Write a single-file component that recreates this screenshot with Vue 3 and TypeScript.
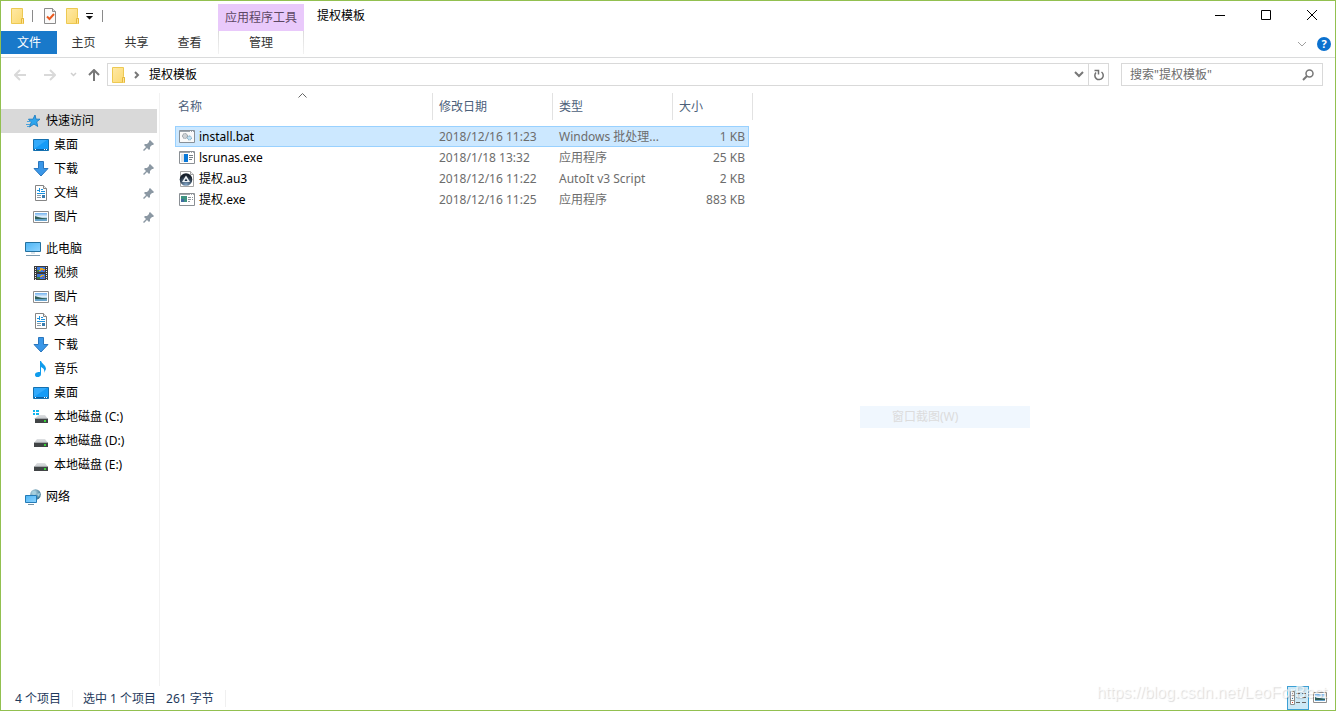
<script setup lang="ts">
import { ref } from 'vue'

interface NavItem {
  label: string
  icon: string
  pinned?: boolean
}
interface NavGroup extends NavItem {
  selected?: boolean
  children: NavItem[]
}
interface FileRow {
  name: string
  icon: string
  date: string
  type: string
  size: string
}

const tabs: string[] = ['主页', '共享', '查看']

const groups: NavGroup[] = [
  {
    label: '快速访问',
    icon: 'star',
    selected: true,
    children: [
      { label: '桌面', icon: 'desktop', pinned: true },
      { label: '下载', icon: 'download', pinned: true },
      { label: '文档', icon: 'document', pinned: true },
      { label: '图片', icon: 'picture', pinned: true },
    ],
  },
  {
    label: '此电脑',
    icon: 'computer',
    children: [
      { label: '视频', icon: 'video' },
      { label: '图片', icon: 'picture' },
      { label: '文档', icon: 'document' },
      { label: '下载', icon: 'download' },
      { label: '音乐', icon: 'music' },
      { label: '桌面', icon: 'desktop' },
      { label: '本地磁盘 (C:)', icon: 'drive-c' },
      { label: '本地磁盘 (D:)', icon: 'drive' },
      { label: '本地磁盘 (E:)', icon: 'drive' },
    ],
  },
  { label: '网络', icon: 'network', children: [] },
]

const files: FileRow[] = [
  { name: 'install.bat', icon: 'bat', date: '2018/12/16 11:23', type: 'Windows 批处理...', size: '1 KB' },
  { name: 'lsrunas.exe', icon: 'exe', date: '2018/1/18 13:32', type: '应用程序', size: '25 KB' },
  { name: '提权.au3', icon: 'au3', date: '2018/12/16 11:22', type: 'AutoIt v3 Script', size: '2 KB' },
  { name: '提权.exe', icon: 'exe-green', date: '2018/12/16 11:25', type: '应用程序', size: '883 KB' },
]

const selected = ref<string>('install.bat')
const query = ref<string>('')
</script>

<template>
  <div class="window">
    <svg class="defs" aria-hidden="true">
      <defs>
        <linearGradient id="g-folder" x1="0" y1="0" x2="1" y2="1">
          <stop offset="0" stop-color="#ffe9a6" />
          <stop offset="1" stop-color="#fbd96f" />
        </linearGradient>
        <linearGradient id="g-blue" x1="0" y1="0" x2="1" y2="1">
          <stop offset="0" stop-color="#4db5f5" />
          <stop offset="1" stop-color="#8fd4ff" />
        </linearGradient>
        <linearGradient id="g-sky" x1="0" y1="0" x2="0" y2="1">
          <stop offset="0" stop-color="#6fb0ee" />
          <stop offset="0.5" stop-color="#eef7fc" />
          <stop offset="0.7" stop-color="#5d9bb8" />
          <stop offset="1" stop-color="#6fa9d6" />
        </linearGradient>
        <linearGradient id="g-drive" x1="0" y1="0" x2="0" y2="1">
          <stop offset="0" stop-color="#dfe1e3" />
          <stop offset="1" stop-color="#c3c6ca" />
        </linearGradient>
        <radialGradient id="g-globe" cx="0.35" cy="0.35" r="0.7">
          <stop offset="0" stop-color="#c4e2ee" />
          <stop offset="1" stop-color="#38728f" />
        </radialGradient>
        <radialGradient id="g-orb" cx="0.5" cy="0.9" r="0.7">
          <stop offset="0" stop-color="#7ea2c4" />
          <stop offset="1" stop-color="#17202b" />
        </radialGradient>
      </defs>
      <symbol id="i-folder" viewBox="0 0 16 16">
        <path d="M2.500.5h11v9l1 1v5h-12z" fill="url(#g-folder)" stroke="#edc952" />
        <path d="M12.500 15.500v-5h2v5" fill="#ffe596" stroke="#e6b93c" />
      </symbol>
      <symbol id="i-props" viewBox="0 0 16 16">
        <path d="M2.500.5h8l3 3v12h-11z" fill="#fafafa" stroke="#8b8b8b" />
        <path d="M10.500.5v3h3" fill="#ddd" stroke="#8b8b8b" />
        <path d="M5 8.500l2.500 2.500 4.500-5" fill="none" stroke="#ea5a20" stroke-width="2" />
      </symbol>
      <symbol id="i-star" viewBox="0 0 16 16">
        <path d="M10 2l1 4.200h4l-3.300 2.600 1 4.700L9 11l-4.500 3 1.700-4.800L3.500 6.200h4.500z" fill="#2da5ee" stroke="#2583c6" />
        <path d="M2 8.500h4M1 11.500h4M2 13.500h2" stroke="#4aa3dc" />
      </symbol>
      <symbol id="i-desktop" viewBox="0 0 16 16">
        <path d="M.5 2.500h15v11H.5z" fill="#149bf7" stroke="#1470af" />
        <path d="M1 12L14 3H1z" fill="#33aafb" />
        <path d="M1 12.500h14" stroke="#0c5d9e" />
        <path d="M2 12.500h1M11 12.500h1M13 12.500h1" stroke="#fff" />
      </symbol>
      <symbol id="i-download" viewBox="0 0 16 16">
        <path d="M5.500.5h5v7h4.500L8 15 1 7.500h4.500z" fill="#3a97e8" stroke="#2a76bd" />
      </symbol>
      <symbol id="i-document" viewBox="0 0 16 16">
        <path d="M2.500.5h8l3 3v12h-11z" fill="#fff" stroke="#858585" />
        <path d="M10.500.5v3h3" fill="#eee" stroke="#858585" />
        <path d="M4 5.500h3M6.500 3v4M8 4.500h2M8 6.500h4M4 8.500h8" fill="none" stroke="#1c91dd" />
        <path d="M4 10.500h4M4 12.500h4" stroke="#8b9aa6" />
        <path d="M9 10h3v3H9z" fill="#3a7cae" />
      </symbol>
      <symbol id="i-picture" viewBox="0 0 16 16">
        <path d="M.5 2.500h15v11H.5z" fill="#fff" stroke="#8e8e8e" />
        <path d="M2 4h12v8H2z" fill="url(#g-sky)" />
        <path d="M2 7l3 1 4 1 5 .5V10H2z" fill="#315f58" />
      </symbol>
      <symbol id="i-computer" viewBox="0 0 16 16">
        <path d="M.5 1.500h15v9H.5z" fill="url(#g-blue)" stroke="#24719f" />
        <path d="M6 11h4v2H6z" fill="#dbe4ea" />
        <path d="M1 14.500h14" stroke="#7c9aaf" />
      </symbol>
      <symbol id="i-video" viewBox="0 0 16 16">
        <path d="M1 1h14v14H1z" fill="#3b3b3b" />
        <path d="M4 2h8v5H4zM4 9h8v5H4z" fill="#3d78da" />
        <path d="M4 5h2v2H4zM4 12h3v2H4z" fill="#397a43" />
        <path d="M7 3h3v1h2v1H8v1H6V5h1zM8 10h3v1H9v1H7v-1h1z" fill="#e5a724" />
        <path d="M10 5h1v1h-1zM10 12h1v1h-1z" fill="#da3929" />
        <path d="M2.500 2v13M13.500 2v13" stroke="#eee" stroke-dasharray="1 1" />
      </symbol>
      <symbol id="i-music" viewBox="0 0 16 16">
        <path d="M7 0h1c1 3 5 4 5 8l-2 4c1-4-1-5-3-6v7c0 4-6 4-6 1s3-3 5-3z" fill="#109cec" />
      </symbol>
      <symbol id="i-drive" viewBox="0 0 16 16">
        <path d="M4 6h8l3 4H1z" fill="url(#g-drive)" />
        <path d="M1 10h14v4H1z" fill="#414446" />
        <path d="M1 9.500h14" stroke="#a2a6a9" />
        <path d="M11 11h2v2h-2z" fill="#38d338" />
      </symbol>
      <symbol id="i-drive-c" viewBox="0 0 16 16">
        <path d="M6 6h6l3 4H1z" fill="url(#g-drive)" />
        <path d="M2 10h13v4H2z" fill="#414446" />
        <path d="M2 9.500h13" stroke="#a2a6a9" />
        <path d="M11 11h2v2h-2z" fill="#38d338" />
        <path d="M0 1h2v2H0zM3 1h3v2H3zM0 4h2v2H0zM3 4h3v2H3z" fill="#10b5ee" />
      </symbol>
      <symbol id="i-network" viewBox="0 0 16 16">
        <circle cx="10.500" cy="5.500" r="5.300" fill="url(#g-globe)" />
        <path d="M7 3l3-1 1 2-2 2zM12 5l3-1-1 4z" fill="#a5d1df" />
        <path d="M.5 6.500h11v7H.5z" fill="url(#g-blue)" stroke="#247bb6" />
        <path d="M3 15.500h6" stroke="#7592a5" />
      </symbol>
      <symbol id="i-bat" viewBox="0 0 16 16">
        <path d="M.5 1.500h15v12H.5z" fill="#fafafa" stroke="#879098" />
        <path d="M1 2.500h14" stroke="#9aa4ac" />
        <path d="M11 2.500h1M13 2.500h1" stroke="#fff" />
        <circle cx="6" cy="7" r="2.500" fill="#cdd2d6" stroke="#7e878e" stroke-dasharray="1 .6" />
        <circle cx="10.500" cy="9" r="2" fill="#c2e0f2" stroke="#639dbd" stroke-dasharray="1 .6" />
      </symbol>
      <symbol id="i-exe" viewBox="0 0 16 16">
        <path d="M.5 1.500h15v12H.5z" fill="#fff" stroke="#8a8f94" />
        <path d="M1 2.500h14" stroke="#a3a8ad" />
        <path d="M11 2.500h1M13 2.500h1" stroke="#fff" />
        <path d="M2 4h3v8H2z" fill="#dfe3e6" />
        <path d="M5 4h4v8H5z" fill="#0878d8" />
        <path d="M10 5.500h4M10 7.500h4M10 9.500h3" stroke="#777f86" />
      </symbol>
      <symbol id="i-exe-green" viewBox="0 0 16 16">
        <path d="M.5 1.500h15v12H.5z" fill="#fff" stroke="#8a8f94" />
        <path d="M1 2.500h14" stroke="#a3a8ad" />
        <path d="M11 2.500h1M13 2.500h1" stroke="#fff" />
        <path d="M2 4h6v6H2z" fill="#3d9280" />
        <path d="M2 7h3v3H2z" fill="#3f6ba0" />
        <path d="M9 5.500h3M9 7.500h3M9 9.500h2M13 5.500h1M13 7.500h1" stroke="#8b949b" />
      </symbol>
      <symbol id="i-au3" viewBox="0 0 16 16">
        <path d="M1.500.5h10l3 3v12h-13z" fill="#fff" stroke="#a5a5a5" />
        <path d="M11.500.5v3h3" fill="#eee" stroke="#a5a5a5" />
        <circle cx="7" cy="8.500" r="6.300" fill="url(#g-orb)" />
        <path d="M7 4.500l4 6.500H3z" fill="#eef2f5" />
        <path d="M7 7.500l1.500 2.500h-3z" fill="#1c3047" />
      </symbol>
      <symbol id="i-pin" viewBox="0 0 12 12">
        <path d="M7 1l4 4-1 1-1 0-2 2 0 2-1 1-2-2-3 3-1-1 3-3-2-2 1-1h2l2-2V2z" fill="#8b98a3" />
      </symbol>
    </svg>

    <header class="ribbon">
      <div class="left">
        <div class="quick">
          <svg class="icon"><use href="#i-folder" /></svg>
          <span class="bar"></span>
          <button class="tool" aria-label="属性"><svg class="icon"><use href="#i-props" /></svg></button>
          <button class="tool" aria-label="新建文件夹"><svg class="icon"><use href="#i-folder" /></svg></button>
          <button class="tool more" aria-label="自定义快速访问工具栏">
            <svg width="8" height="7" viewBox="0 0 8 7"><path d="M0 0h7v1H0zM0 3h7L3.500 6.500z" fill="#111" /></svg>
          </button>
          <span class="bar"></span>
        </div>
        <nav class="tabs">
          <button class="tab file">文件</button>
          <button v-for="tab in tabs" :key="tab" class="tab">{{ tab }}</button>
        </nav>
      </div>
      <div class="context">
        <div class="context-title">应用程序工具</div>
        <button class="tab manage">管理</button>
      </div>
      <h1 class="title">提权模板</h1>
      <div class="right">
        <div class="controls">
          <button class="ctl" aria-label="最小化"><svg width="10" height="10"><path d="M0 5.500h10" stroke="#000" /></svg></button>
          <button class="ctl" aria-label="最大化"><svg width="10" height="10"><path d="M.5.5h9v9h-9z" fill="none" stroke="#000" /></svg></button>
          <button class="ctl" aria-label="关闭"><svg width="10" height="10"><path d="M0 0l10 10M10 0L0 10" stroke="#000" /></svg></button>
        </div>
        <div class="help">
          <button class="tool" aria-label="展开功能区"><svg width="10" height="6"><path d="M1 1l4 4 4-4" fill="none" stroke="#a0a0a0" /></svg></button>
          <button class="question" aria-label="帮助">?</button>
        </div>
      </div>
    </header>

    <div class="address">
      <div class="arrows">
        <button class="tool" aria-label="后退"><svg width="12" height="12"><path d="M12 6H1M6 1L1 6l5 5" fill="none" stroke="#d9d9d9" stroke-width="2" /></svg></button>
        <button class="tool" aria-label="前进"><svg width="12" height="12"><path d="M0 6h11M6 1l5 5-5 5" fill="none" stroke="#d9d9d9" stroke-width="2" /></svg></button>
        <button class="tool recent" aria-label="最近位置"><svg width="7" height="5"><path d="M1 1l2.500 2.500L6 1" fill="none" stroke="#cfcfcf" stroke-width="1.500" /></svg></button>
        <button class="tool" aria-label="上移"><svg width="12" height="12"><path d="M6 12V1M1 6l5-5 5 5" fill="none" stroke="#777" stroke-width="2" /></svg></button>
      </div>
      <div class="path">
        <svg class="icon"><use href="#i-folder" /></svg>
        <svg class="chevron" width="6" height="8"><path d="M1 1l3 3-3 3" fill="none" stroke="#777" stroke-width="2" /></svg>
        <a class="crumb" href="#">提权模板</a>
        <button class="tool drop" aria-label="历史记录"><svg width="10" height="7"><path d="M1 1l4 4 4-4" fill="none" stroke="#777" stroke-width="2" /></svg></button>
        <button class="refresh" aria-label="刷新">
          <svg width="12" height="12"><path d="M3 3.500A4.200 4.200 0 1 0 8.500 3M1.500 1.500h4v4" fill="none" stroke="#707070" stroke-width="1.500" /></svg>
        </button>
      </div>
      <div class="search">
        <input v-model="query" type="search" aria-label="搜索" placeholder='搜索"提权模板"' />
        <svg width="12" height="12"><circle cx="7.500" cy="4.500" r="3.500" fill="none" stroke="#777" stroke-width="1.500" /><path d="M5 7l-4 4" stroke="#777" stroke-width="2" /></svg>
      </div>
    </div>

    <div class="body">
      <nav class="sidebar">
        <div v-for="group in groups" :key="group.label" class="group">
          <a href="#" class="nav-row" :class="{ current: group.selected }">
            <svg class="icon"><use :href="'#i-' + group.icon" /></svg>{{ group.label }}
          </a>
          <a v-for="item in group.children" :key="item.label" href="#" class="nav-row child">
            <svg class="icon"><use :href="'#i-' + item.icon" /></svg>{{ item.label }}
            <svg v-if="item.pinned" class="pin"><use href="#i-pin" /></svg>
          </a>
        </div>
      </nav>
      <main class="files">
        <table>
          <thead>
            <tr>
              <th class="c-name">
                名称
                <svg class="sort" width="9" height="5"><path d="M.5 4.500l4-4 4 4" fill="none" stroke="#666" /></svg>
              </th>
              <th class="c-date">修改日期</th>
              <th class="c-type">类型</th>
              <th class="c-size">大小</th>
            </tr>
          </thead>
          <tbody>
            <tr v-for="file in files" :key="file.name" :class="{ selected: file.name === selected }" @click="selected = file.name">
              <td class="name"><svg class="icon"><use :href="'#i-' + file.icon" /></svg>{{ file.name }}</td>
              <td>{{ file.date }}</td>
              <td>{{ file.type }}</td>
              <td class="size">{{ file.size }}</td>
            </tr>
          </tbody>
        </table>
      </main>
    </div>

    <footer class="status">
      <span class="count">4 个项目</span>
      <span class="chosen">选中 1 个项目</span>
      <span class="bytes">261 字节</span>
      <div class="views">
        <button class="view active" aria-label="详细信息">
          <svg width="16" height="14">
            <path d="M.5.500h4v13h-4z" fill="#fff" stroke="#8d8d8d" />
            <path d="M1 4.500h3M1 9.500h3" stroke="#999" />
            <path d="M2 2.500h1M2 7.500h1" stroke="#3d7ea6" />
            <path d="M2 11.500h1" stroke="#d43d2e" />
            <path d="M6 2.500h4M12 2.500h4M6 6.500h4M12 6.500h4M6 11.500h4M12 11.500h4" stroke="#666" />
          </svg>
        </button>
        <button class="view" aria-label="大图标">
          <svg width="14" height="12" viewBox="0 0 14 12">
            <path d="M.5.5h13v10H.5z" fill="#fff" stroke="#8e8e8e" />
            <path d="M2 2h10v7H2z" fill="url(#g-sky)" />
            <path d="M2 5l4 1 6 1v1H2z" fill="#315f58" />
          </svg>
        </button>
      </div>
    </footer>

    <div class="ghost">窗口截图(W)</div>
    <div class="watermark">https://blog.csdn.net/LeoForBest</div>
  </div>
</template>

<style>
body {
  margin: 0;
  background: #fff;
}
</style>

<style scoped>
.window {
  position: relative;
  display: flex;
  flex-direction: column;
  box-sizing: border-box;
  min-height: 100vh;
  border: 1px solid #92c050;
  background: #fff;
  color: #000;
  font: 12px/16px "Noto Sans", "Noto Sans CJK SC", sans-serif;
}
.window *,
.window *::after {
  box-sizing: border-box;
}
.defs {
  position: absolute;
  width: 0;
  height: 0;
}
svg {
  display: block;
  flex: none;
}
.icon {
  width: 16px;
  height: 16px;
}
button {
  display: flex;
  align-items: center;
  justify-content: center;
  padding: 0;
  border: 0;
  background: none;
  color: inherit;
  font: inherit;
}
a {
  color: inherit;
  text-decoration: none;
}
.ribbon {
  display: flex;
  height: 57px;
  border-bottom: 1px solid #dadbdc;
}
.left {
  width: 217px;
}
.quick {
  display: flex;
  align-items: center;
  height: 30px;
  padding-left: 8px;
}
.bar {
  width: 1px;
  height: 12px;
  margin: 0 9px 0 7px;
  background: #8a8a8a;
}
.tool + .tool {
  margin-left: 6px;
}
.more + .bar {
  margin-left: 8px;
}
.tabs {
  display: flex;
}
.tab {
  width: 53px;
  height: 23px;
  color: #333;
  padding-top: 1px;
}
.tab.file {
  width: 56px;
  background: #1979ca;
  color: #fff;
}
.context {
  width: 86px;
  padding-top: 3px;
}
.context-title {
  height: 27px;
  background: #e9c9fb;
  color: #5c4763;
  line-height: 27px;
  text-align: center;
  white-space: nowrap;
}
.tab.manage {
  width: 100%;
  height: 23px;
  border: solid;
  border-width: 0 1px;
  border-image: linear-gradient(#dadada, #f3f3f3) 1;
}
.title {
  margin: 0 0 0 13px;
  font-size: 12px;
  font-weight: 400;
  line-height: 30px;
}
.right {
  margin-left: auto;
}
.controls {
  display: flex;
  height: 28px;
}
.ctl {
  width: 46px;
}
.help {
  display: flex;
  align-items: center;
  justify-content: flex-end;
  gap: 10px;
  height: 30px;
  padding-right: 4px;
}
.question {
  width: 14px;
  height: 14px;
  border-radius: 50%;
  background: #0b71cf;
  color: #fff;
  font-size: 11px;
  font-weight: 700;
  line-height: 14px;
}
.address {
  display: flex;
  align-items: center;
  height: 35px;
  padding: 0 12px 2px 0;
}
.arrows {
  display: flex;
  align-items: center;
  width: 106px;
  padding-left: 13px;
}
.arrows .tool + .tool {
  margin-left: 18px;
}
.arrows .recent.tool {
  margin-left: 14px;
}
.arrows .recent + .tool {
  margin-left: 11px;
}
.path {
  display: flex;
  flex: 1;
  align-items: center;
  height: 23px;
  margin-right: 12px;
  padding-left: 2px;
  border: 1px solid #d9d9d9;
}
.chevron {
  margin: 0 9px 0 8px;
}
.drop {
  margin-left: auto;
  margin-right: 4px;
}
.refresh {
  width: 20px;
  height: 100%;
  border-left: 1px solid #d9d9d9;
}
.search {
  display: flex;
  align-items: center;
  width: 202px;
  height: 23px;
  padding: 0 8px;
  border: 1px solid #d9d9d9;
}
.search input {
  flex: 1;
  min-width: 0;
  padding: 0;
  border: 0;
  outline: 0;
  background: none;
  font: inherit;
}
.search input::placeholder {
  color: #6d6d6d;
}
.body {
  display: flex;
  flex: 1;
}
.sidebar {
  width: 159px;
  padding: 16px 2px 0 0;
  border-right: 1px solid #f2f2f2;
}
.group + .group {
  margin-top: 8px;
}
.nav-row {
  display: flex;
  align-items: center;
  gap: 5px;
  height: 24px;
  padding-left: 24px;
  white-space: nowrap;
}
.nav-row.child {
  padding-left: 32px;
}
.nav-row.current {
  background: #d9d9d9;
}
.pin {
  width: 12px;
  height: 12px;
  margin-left: auto;
  margin-right: 2px;
}
.files {
  flex: 1;
  padding-left: 15px;
}
table {
  border-spacing: 0;
  table-layout: fixed;
  width: 574px;
}
th {
  position: relative;
  height: 27px;
  padding: 0 0 0 6px;
  border-right: 1px solid #e2e2e2;
  color: #4c607a;
  font-weight: 400;
  text-align: left;
}
thead::after {
  content: "";
  display: block;
  height: 6px;
}
.c-name {
  width: 258px;
  padding-left: 3px;
}
.c-date,
.c-type {
  width: 120px;
}
.c-size {
  border-right: 0;
}
.c-size::after {
  content: "";
  position: absolute;
  top: 0;
  right: -4px;
  width: 1px;
  height: 27px;
  background: #e2e2e2;
}
.sort {
  position: absolute;
  top: 0;
  left: calc(50% - 6px);
}
td {
  height: 21px;
  padding: 0 0 0 6px;
  color: #6d6d6d;
  white-space: nowrap;
}
td.name {
  display: flex;
  align-items: center;
  gap: 4px;
  padding-left: 4px;
  color: #000;
}
td.size {
  padding-right: 4px;
  text-align: right;
}
.selected td {
  background: #cce8ff;
}
.selected {
  outline: 1px solid #99d1ff;
  outline-offset: -1px;
}
.status {
  display: flex;
  align-items: center;
  height: 24px;
  padding-left: 14px;
  color: #1e395b;
}
.status > span {
  padding-top: 1px;
}
.count,
.bytes {
  padding-right: 11px;
  border-right: 1px solid #f0f0f0;
}
.chosen {
  margin: 0 10px 0 10px;
}
.views {
  display: flex;
  height: 100%;
  margin-left: auto;
  padding-right: 4px;
}
.view {
  width: 22px;
}
.view.active {
  border: 1px solid #3c9fd4;
  background: #cce8f6;
}
.ghost {
  position: absolute;
  top: 405px;
  left: 859px;
  width: 170px;
  height: 22px;
  padding-left: 32px;
  background: #f0f7fe;
  color: #dcdcdc;
  line-height: 21px;
}
.watermark {
  position: absolute;
  right: 8px;
  bottom: 7px;
  color: rgba(255, 255, 255, 0.7);
  font: 16px/20px "Liberation Sans", sans-serif;
  text-shadow: 1px 1px 1px rgba(0, 0, 0, 0.14);
  pointer-events: none;
}
</style>
